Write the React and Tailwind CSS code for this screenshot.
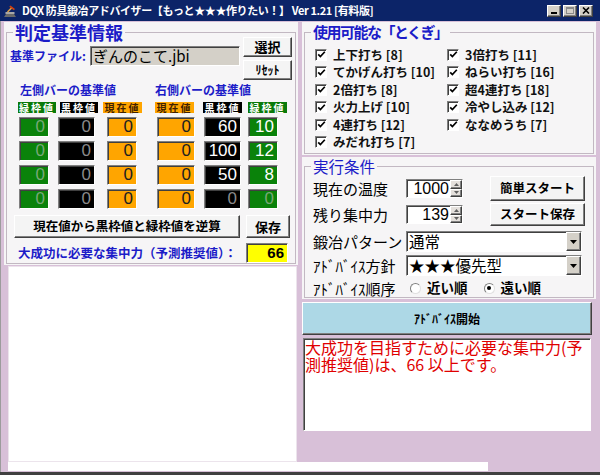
import React from "react";

const jp = "font-['Noto_Sans_CJK_JP',sans-serif]";
const arial = "font-['Liberation_Sans',Arial,sans-serif]";
const raised =
  "border border-t-white border-l-white border-r-[#404040] border-b-[#404040] shadow-[inset_-1px_-1px_0_#808080]";
const sunken =
  "border border-t-[#808080] border-l-[#808080] border-r-white border-b-white shadow-[inset_1px_1px_0_#404040]";

const GroupBox = ({ title, legendClass, className, children }) => (
  <div className={`bg-[#f6f5f6] flex ${className}`}>
    <fieldset className="mx-[2px] mb-[1px] flex-1 min-w-0 border border-[#c2b8c2]">
      <legend className={`ml-[6px] px-[2px] text-[#1c1cc8] ${legendClass}`}>{title}</legend>
      {children}
    </fieldset>
  </div>
);

// left-side data boxes: [green, black, orange] | [orange, black, green]
const boxCols = [
  { ml: "ml-[12px]", w: "w-[30px]", bg: "bg-[#0a820a]" },
  { ml: "ml-[9px]", w: "w-[37px]", bg: "bg-black" },
  { ml: "ml-[12px]", w: "w-[30px]", bg: "bg-[#ffa500]" },
  { ml: "ml-[20px]", w: "w-[38px]", bg: "bg-[#ffa500]" },
  { ml: "ml-[9px]", w: "w-[37px]", bg: "bg-black" },
  { ml: "ml-[7px]", w: "w-[30px]", bg: "bg-[#0a820a]" },
];

const dimGreen = "text-[#78a878]";
const dimBlack = "text-[#8a8a8a]";
const rows = [
  [["0", dimGreen], ["0", dimBlack], ["0", "text-[#202020]"], ["0", "text-[#202020]"], ["60", "text-white"], ["10", "text-white"]],
  [["0", dimGreen], ["0", dimBlack], ["0", "text-[#202020]"], ["0", "text-[#202020]"], ["100", "text-white"], ["12", "text-white"]],
  [["0", dimGreen], ["0", dimBlack], ["0", "text-[#202020]"], ["0", "text-[#202020]"], ["50", "text-white"], ["8", "text-white"]],
  [["0", dimGreen], ["0", dimBlack], ["0", "text-[#202020]"], ["0", "text-[#202020]"], ["0", dimBlack], ["0", dimGreen]],
];

const skillsLeft = ["上下打ち [8]", "てかげん打ち [10]", "2倍打ち [8]", "火力上げ [10]", "4連打ち [12]", "みだれ打ち [7]"];
const skillsRight = ["3倍打ち [11]", "ねらい打ち [16]", "超4連打ち [18]", "冷やし込み [12]", "ななめうち [7]"];

const Check = ({ label }) => (
  <div className="flex items-center h-[17.5px]">
    <div className={`w-[12px] h-[12px] bg-white ${sunken} flex items-center justify-center`}>
      <svg width="9" height="9" viewBox="0 0 9 9">
        <path d="M1.2 4.3 L3.4 6.6 L7.8 1.8" fill="none" stroke="#000" strokeWidth="1.7" />
      </svg>
    </div>
    <span className="ml-[6px] text-[12.5px] font-bold leading-none text-[#111]">{label}</span>
  </div>
);

const Spinner = ({ value }) => (
  <div className={`flex w-[57px] h-[19px] bg-white ${sunken}`}>
    <div className={`flex-1 text-right text-[16px] leading-[17px] pr-[1px] ${arial}`}>{value}</div>
    <div className="w-[12px] flex flex-col">
      <div className={`flex-1 bg-[#e4e0dc] ${raised} flex items-center justify-center`}>
        <svg width="5" height="3" viewBox="0 0 5 3"><path d="M0 3h5L2.5 0z" fill="#606060" /></svg>
      </div>
      <div className={`flex-1 bg-[#e4e0dc] ${raised} flex items-center justify-center`}>
        <svg width="5" height="3" viewBox="0 0 5 3"><path d="M0 0h5L2.5 3z" fill="#606060" /></svg>
      </div>
    </div>
  </div>
);

const Select = ({ value }) => (
  <div className={`flex w-[176px] h-[21px] bg-white ${sunken}`}>
    <div className="flex-1 text-[15.5px] leading-[19px] pl-[2px] text-black">{value}</div>
    <div className={`w-[15px] bg-[#d4d0c8] ${raised} flex items-center justify-center`}>
      <svg width="7" height="4" viewBox="0 0 7 4"><path d="M0 0h7L3.5 4z" fill="#000" /></svg>
    </div>
  </div>
);

const Radio = ({ checked, label, className }) => (
  <div className={`flex items-center ${className}`}>
    <div className="w-[11px] h-[11px] rounded-full bg-white border border-t-[#808080] border-l-[#808080] border-r-[#e0e0e0] border-b-[#e0e0e0] flex items-center justify-center">
      {checked && <div className="w-[4px] h-[4px] rounded-full bg-black" />}
    </div>
    <span className="ml-[6px] text-[13.5px] font-bold leading-none">{label}</span>
  </div>
);

export default function App() {
  return (
    <div className={`w-[600px] h-[475px] bg-[#d8c0d8] flex flex-col border-b-[3px] border-b-[#404040] ${jp}`}>
      {/* title bar */}
      <div className="h-[21px] shrink-0 bg-[#0c2468] flex items-center">
        <svg className="ml-[3px]" width="14" height="14" viewBox="0 0 14 14">
          <path d="M1 13h12l-2-3H3z" fill="#6a6a6a" />
          <path d="M2.5 10h9V8h-9z" fill="#a8a8a8" />
          <path d="M4.5 8 L9 3.5" stroke="#e0a040" strokeWidth="1.6" />
          <path d="M7.5 1.5 L12 5 L10.8 6.3 L6.3 2.8z" fill="#d04010" />
        </svg>
        <span className="ml-[5px] text-white text-[11px] font-bold leading-none whitespace-nowrap tracking-[-0.4px]">
          DQX 防具鍛冶アドバイザー【もっと★★★作りたい！】 Ver 1.21 [有料版]
        </span>
        <div className="ml-auto mr-[7px] flex items-center gap-[2px]">
          <div className={`w-[14px] h-[12px] bg-[#d4d0c8] ${raised} flex items-end justify-center pb-[2px]`}>
            <div className="w-[6px] h-[2px] bg-black -ml-[1px]" />
          </div>
          <div className={`w-[14px] h-[12px] bg-[#d4d0c8] ${raised} flex items-center justify-center`}>
            <div className="w-[8px] h-[7px] border border-t-2 border-[#8a8a8a]" />
          </div>
          <div className={`w-[14px] h-[12px] bg-[#d4d0c8] ${raised} flex items-center justify-center`}>
            <svg width="8" height="7" viewBox="0 0 8 7">
              <path d="M1 0.5 L7 6.5 M7 0.5 L1 6.5" stroke="#000" strokeWidth="1.6" />
            </svg>
          </div>
        </div>
      </div>

      <div className="flex-1 flex flex-col border-l border-l-[#9c9c9c]">
        <div className="flex items-start pt-[1px] h-[441px] shrink-0">
          {/* left column */}
          <div className="ml-[3px] w-[294px] flex flex-col gap-[1px]">
            <GroupBox title="判定基準情報" legendClass="text-[18px] leading-[20px] font-bold" className="h-[243px] shrink-0">
              <div className="flex">
                <div className="pl-[3px] mt-[4px] w-[83px] h-[20px] leading-[20px] text-[12px] font-bold text-[#1c1cc8] whitespace-nowrap">
                  基準ファイル:
                </div>
                <div className={`mt-[4px] w-[150px] h-[20px] bg-[#d4d0c8] ${sunken} text-[15px] leading-[17px] pl-[2px] text-black`}>
                  ぎんのこて.jbi
                </div>
                <div className="ml-[3px] -mt-[5px] flex flex-col gap-[3px]">
                  <div className={`w-[49px] h-[20px] bg-[#f4f4f4] ${raised} flex items-center justify-center text-[13px] font-bold`}>選択</div>
                  <div className={`w-[49px] h-[20px] bg-[#f4f4f4] ${raised} flex items-center justify-center text-[12px] font-bold`}>ﾘｾｯﾄ</div>
                </div>
              </div>

              <div className="flex mt-[3px] h-[14px] leading-[14px] text-[12px] font-bold text-[#1c1cc8]">
                <div className="ml-[13px] w-[135px]">左側バーの基準値</div>
                <div>右側バーの基準値</div>
              </div>

              <div className="flex mt-[5px] h-[11px] text-[10px] leading-[11px] font-bold text-center tracking-[2px]">
                <div className="ml-[11px] w-[38px] bg-[#0a7a0a] text-white">緑枠値</div>
                <div className="ml-[4px] w-[38px] bg-black text-white">黒枠値</div>
                <div className="ml-[5px] w-[39px] bg-[#ffa500] text-[#402000]">現在値</div>
                <div className="ml-[13px] w-[39px] bg-[#ffa500] text-[#402000]">現在値</div>
                <div className="ml-[9px] w-[39px] bg-black text-white">黒枠値</div>
                <div className="ml-[6px] w-[39px] bg-[#0a7a0a] text-white">緑枠値</div>
              </div>

              <div className="mt-[4px] flex flex-col gap-[4px]">
                {rows.map((row, i) => (
                  <div key={i} className="flex h-[20px]">
                    {row.map(([v, color], j) => (
                      <div
                        key={j}
                        className={`${boxCols[j].ml} ${boxCols[j].w} ${boxCols[j].bg} ${color} ${sunken} ${arial} text-[17px] leading-[18px] text-right pr-[3px]`}
                      >
                        {v}
                      </div>
                    ))}
                  </div>
                ))}
              </div>

              <div className="flex mt-[6px] h-[23px]">
                <div className={`ml-[7px] w-[226px] bg-[#f4f4f4] ${raised} flex items-center justify-center text-[12.5px] font-bold`}>
                  現在値から黒枠値と緑枠値を逆算
                </div>
                <div className={`ml-[6px] w-[44px] bg-[#f4f4f4] ${raised} flex items-center justify-center text-[13px] font-bold`}>
                  保存
                </div>
              </div>

              <div className="flex mt-[5px] h-[20px] items-center">
                <div className="ml-[11px] w-[228px] text-[12.5px] font-bold text-[#1c1cc8] whitespace-nowrap">
                  大成功に必要な集中力（予測推奨値）：
                </div>
                <div className={`w-[42px] h-[20px] bg-[#ffff00] ${sunken} ${arial} text-right pr-[3px] text-[15px] leading-[18px] font-bold`}>
                  66
                </div>
              </div>
            </GroupBox>
            {/* empty result list */}
            <div className="relative z-10 isolate ml-[4px] w-[289px] h-[196px] shrink-0 bg-white border border-[#ece4ec] text-[12px]">
              {"\u00a0"}
            </div>
          </div>

          {/* right column */}
          <div className="ml-[4px] w-[294px] flex flex-col">
            <GroupBox
              title="使用可能な「とくぎ」"
              legendClass="text-[15px] leading-[20px] font-bold tracking-[-1.5px]"
              className="h-[133px] shrink-0"
            >
              <div className="mt-[4px] pl-[10px] flex">
                <div className="w-[132px] flex flex-col">
                  {skillsLeft.map((s) => (
                    <Check key={s} label={s} />
                  ))}
                </div>
                <div className="flex flex-col">
                  {skillsRight.map((s) => (
                    <Check key={s} label={s} />
                  ))}
                </div>
              </div>
            </GroupBox>

            <GroupBox title="実行条件" legendClass="text-[15.5px] leading-[18px]" className="mt-[2px] h-[142px] shrink-0">
              <div className="pl-[8px] flex flex-col text-[15px] text-black">
                <div className="mt-[1px] flex items-center h-[25px]">
                  <div className="w-[93px] leading-none">現在の温度</div>
                  <Spinner value="1000" />
                  <div className={`ml-[27px] w-[95px] h-[25px] bg-[#f4f4f4] ${raised} flex items-center justify-center text-[12.5px] font-bold`}>
                    簡単スタート
                  </div>
                </div>
                <div className="mt-[2px] flex items-center h-[23px]">
                  <div className="w-[93px] leading-none">残り集中力</div>
                  <Spinner value="139" />
                  <div className={`ml-[27px] w-[95px] h-[23px] bg-[#f4f4f4] ${raised} flex items-center justify-center text-[12.5px] font-bold`}>
                    スタート保存
                  </div>
                </div>
                <div className="mt-[5px] flex items-center h-[21px]">
                  <div className="w-[93px] leading-none whitespace-nowrap">鍛冶パターン</div>
                  <Select value="通常" />
                </div>
                <div className="mt-[3px] flex items-center h-[21px]">
                  <div className="w-[93px] leading-none whitespace-nowrap">ｱﾄﾞﾊﾞｲｽ方針</div>
                  <Select value="★★★優先型" />
                </div>
                <div className="mt-[3px] flex items-center h-[18px]">
                  <div className="w-[97px] leading-none whitespace-nowrap">ｱﾄﾞﾊﾞｲｽ順序</div>
                  <Radio label="近い順" />
                  <Radio checked label="遠い順" className="ml-[16px]" />
                </div>
              </div>
            </GroupBox>

            <div className={`mt-[3px] w-[290px] h-[33px] shrink-0 bg-[#add8e6] ${raised} flex items-center justify-center text-[12px] font-bold`}>
              ｱﾄﾞﾊﾞｲｽ開始
            </div>
            <div className={`mt-[3px] ml-[1px] w-[288px] h-[93px] shrink-0 bg-white ${sunken} pl-[1px] pr-[4px] text-[16px] leading-[17px] text-[#e00000]`}>
              大成功を目指すために必要な集中力(予測推奨値)は、66 以上です。
            </div>
          </div>
        </div>
        <div className="ml-[7px] w-[480px] h-[9px] shrink-0 bg-white" />
      </div>
    </div>
  );
}
